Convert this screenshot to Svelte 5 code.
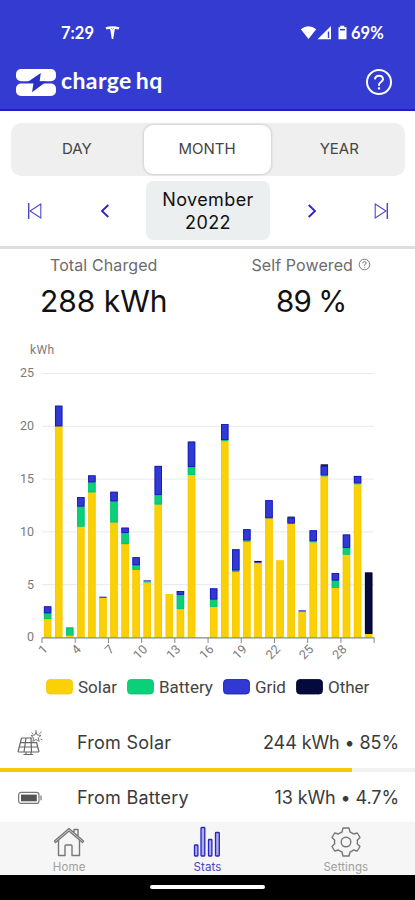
<script lang="ts">
  // running totals in kWh per day: solar, battery, grid, other
  const totals = [
    [1.75, 2.3, 2.95], [20, 20, 21.95], [0.2, 0.9, 0.95], [10.5, 12.4, 13.3], [13.75, 14.7, 15.35],
    [3.75, 3.75, 3.87], [10.9, 12.9, 13.8], [8.85, 9.9, 10.4], [6.4, 6.85, 7.6], [5.2, 5.3, 5.42],
    [12.6, 13.5, 16.25], [4.1, 4.1, 4.1], [2.7, 4.05, 4.4], [15.4, 16.15, 18.55], [0, 0, 0],
    [2.9, 3.6, 4.65], [18.6, 18.7, 20.2], [6.2, 6.35, 8.35], [9.05, 9.2, 10.25], [7.05, 7.05, 7.12, 7.25],
    [11.3, 11.3, 13], [7.3, 7.3, 7.3], [10.75, 10.8, 11.35, 11.45], [2.45, 2.45, 2.58], [9, 9.12, 10.15],
    [15.25, 15.35, 16.25, 16.4], [4.7, 5.4, 6.1], [7.85, 8.5, 9.75], [14.5, 14.6, 15.3], [0.35, 0.35, 0.35, 6.15],
  ];

  const colors = ["#fad106", "#0bcf79", "#3039d2", "#040b3c"];
  const edges = ["#f8ca00", "#08c26d", "#1515b8", "#000522"];
  const series = ["Solar", "Battery", "Grid", "Other"];

  const base = 297.5;
  const unit = 10.56;
  const step = 11.07;

  const bars = totals.flatMap((t, i) =>
    t.map((top, s) => {
      const from = s === 0 ? 0 : t[s - 1];
      return { x: 43.9 + i * step, y: base - top * unit, h: (top - from) * unit, s };
    }).filter((b) => b.h > 0)
  );

  const labels = [1, 4, 7, 10, 13, 16, 19, 22, 25, 28];

  const rows = [
    { icon: "solar", name: "From Solar", value: "244 kWh • 85%", share: 84.7 },
    { icon: "battery", name: "From Battery", value: "13 kWh • 4.7%", share: 4.7 },
  ];

  let range = $state("MONTH");
</script>

<div class="app">
  <header>
    <div class="status">
      <span class="clock">7:29</span>
      <svg class="tesla" width="15" height="14" viewBox="0 0 15 14">
        <path d="M0.5 1.2Q7.5 -0.6 14.5 1.2L13.5 3.6Q11.5 2.8 9.8 3.2L8.2 13H6.8L5.2 3.2Q3.5 2.8 1.5 3.6Z" fill="#fff" />
        <path d="M6 2 7.5 3.4 9 2" fill="none" stroke="#343bd0" stroke-width="0.5" />
      </svg>
      <svg class="signals" width="48" height="16" viewBox="0 0 48 16">
        <path d="M0.8 4.2Q8.5 -1.8 16.2 4.2L8.5 14Z" fill="#fff" />
        <path d="M17.5 14.3 31 1V14.3Z" fill="#fff" />
        <path d="M28.5 6.5V13" stroke="#343bd0" stroke-width="1.4" />
        <path d="M38.5 2.2H40.2V0.8H44.3V2.2H46.5V14.3H38.5Z" fill="#fff" />
        <path d="M40 4.7H45" stroke="#343bd0" stroke-width="1.5" />
      </svg>
      <span class="charge">69%</span>
    </div>
    <div class="brand">
      <svg width="40" height="27" viewBox="0 0 40 27">
        <rect width="40" height="12.2" rx="5" fill="#fff" />
        <rect y="14.6" width="40" height="12.4" rx="5" fill="#fff" />
        <path d="M24.8 4 10.5 13.8H17.6L16 23.3 30.5 12.6H23.6Z" fill="#2a2fc6" />
      </svg>
      <span class="name">charge hq</span>
      <svg class="help" width="28" height="28" viewBox="0 0 28 28" fill="none" stroke="#fff">
        <circle cx="14" cy="14" r="12" stroke-width="2" />
        <path d="M10 11.4Q10.2 7.7 14 7.7T18 11.1Q18 12.8 16 14T14 17V17.8" stroke-width="2" />
        <path d="M14 19.3V21.4" stroke-width="2.2" />
      </svg>
    </div>
  </header>

  <div class="tabs">
    {#each ["DAY", "MONTH", "YEAR"] as tab}
      <button class:active={range === tab} onclick={() => (range = tab)}>{tab}</button>
    {/each}
  </div>

  <nav class="period">
    <svg width="16" height="18" viewBox="0 0 16 18" fill="none" stroke="#4a4ac8">
      <path d="M1.7 1V17" stroke-width="1.4" />
      <path d="M13.8 2V16L3 9Z" stroke-width="1.1" />
    </svg>
    <svg class="prev" width="12" height="16" viewBox="0 0 12 16" fill="none" stroke="#2922c8" stroke-width="1.8">
      <path d="M9.3 2 3 8 9.3 14" />
    </svg>
    <div class="month">November<br />2022</div>
    <svg class="next" width="12" height="16" viewBox="0 0 12 16" fill="none" stroke="#2922c8" stroke-width="1.8">
      <path d="M2.7 2 9 8 2.7 14" />
    </svg>
    <svg width="16" height="18" viewBox="0 0 16 18" fill="none" stroke="#4a4ac8">
      <path d="M14.3 1V17" stroke-width="1.4" />
      <path d="M2.2 2V16L13 9Z" stroke-width="1.1" />
    </svg>
  </nav>

  <section class="summary">
    <div class="stat">
      <div class="label">Total Charged</div>
      <div class="value">288 kWh</div>
    </div>
    <div class="stat">
      <div class="label">
        Self Powered
        <svg width="13" height="13" viewBox="0 0 13 13" fill="none" stroke="#777">
          <circle cx="6.5" cy="6.5" r="5.3" stroke-width="1" />
          <path d="M4.7 5.2Q4.8 3.6 6.5 3.6T8.2 5.1Q8.2 6 6.6 6.8V7.8M6.6 8.8V9.8" stroke-width="1" />
        </svg>
      </div>
      <div class="value pct">89 %</div>
    </div>
  </section>

  <svg class="chart" width="415" height="330" viewBox="0 0 415 330">
    <text x="30" y="14" class="unit" textLength="24">kWh</text>
    {#each [25, 20, 15, 10, 5, 0] as tick}
      {#if tick > 0}
        <line x1="42" x2="374" y1={base - tick * unit} y2={base - tick * unit} stroke="#e6e9ed" stroke-width="1" />
      {/if}
      <text x="34" y={base - tick * unit + 3.9} class="tick">{tick}</text>
    {/each}
    {#each bars as b}
      <rect x={b.x} y={b.y} width="7.4" height={b.h} fill={colors[b.s]} />
      {#if b.h > 2}
        <rect x={b.x + 0.4} y={b.y + 0.4} width="6.6" height={b.h - 0.8} fill="none" stroke={edges[b.s]} stroke-width="0.8" />
      {/if}
    {/each}
    <path d="M42 297.9H374.5" stroke="#85878b" stroke-width="1.2" />
    {#each [...labels, 31] as d}
      <path d={`M${42 + (d - 1) * step} 298v5`} stroke="#85878b" stroke-width="1" />
    {/each}
    {#each labels as d}
      <text class="day" transform={`translate(${48.5 + (d - 1) * step} 310) rotate(-45)`}>{d}</text>
    {/each}
  </svg>

  <div class="legend">
    {#each series as name, i}
      <div class="key">
        <svg width="27" height="16"><rect x="0.5" y="0.5" width="26" height="14.5" rx="3.5" fill={colors[i]} stroke={edges[i]} stroke-width="0.8" /></svg>
        <span>{name}</span>
      </div>
    {/each}
  </div>

  <main>
    {#each rows as row}
      <div class="row">
        {#if row.icon === "solar"}
          <svg width="26" height="26" viewBox="0 0 26 26" fill="none" stroke="#666" stroke-width="1.2">
            <path d="M4.5 8H15.5M3.2 12.7H20M1.7 17H21.3M1 22H22M4.5 8 1 22M9 8 7 22M14 8 14.5 22M19.5 12 22 22M6.5 24.5H16M9 22V25M14 22V25" />
            <path d="M19 2 20.2 5 24 5.4 21.2 8 22.2 11.3 19 9.6 15.8 11.3 16.8 8 14 5.4 17.8 5ZM14.5 2.5 16 4M19 0V2M24.5 2 22.5 3.5M23.5 9 25.5 10" stroke-width="0.9" />
          </svg>
        {:else}
          <svg width="26" height="14" viewBox="0 0 26 14">
            <rect x="1.6" y="1.4" width="20.4" height="11" rx="2.5" fill="none" stroke="#777" stroke-width="1.2" />
            <rect x="4" y="3.6" width="15.8" height="6.7" fill="#555" />
            <path d="M24 4.5V9.3" stroke="#999" stroke-width="1.6" />
          </svg>
        {/if}
        <span class="source">{row.name}</span>
        <span class="amount">{row.value}</span>
      </div>
      <div class="bar"><div class="fill" style="width: {row.share}%"></div></div>
    {/each}
  </main>

  <footer>
    <div class="item">
      <svg width="32" height="32" viewBox="0 0 32 32" fill="none" stroke="#777" stroke-width="1.4" stroke-linejoin="round">
        <path d="M5.5 14V29.5H12V20Q12 19 13 19H18Q19 19 19 20V29.5H26.5V14" />
        <path d="M2.5 16.5 1.5 15 16 2.5 30.5 15 29.5 16.5 16 5ZM21 6V3.5H25V10" />
      </svg>
      <span>Home</span>
    </div>
    <div class="item current">
      <svg width="32" height="32" viewBox="0 0 32 32" fill="#aaaceb" stroke="#2824be" stroke-width="1.3">
        <rect x="3.5" y="19" width="3.4" height="11" rx="0.7" />
        <rect x="10" y="1.5" width="3.8" height="28.5" rx="0.7" />
        <rect x="17.5" y="13.5" width="3.4" height="16.5" rx="0.7" />
        <rect x="24.5" y="6.5" width="3.8" height="23.5" rx="0.7" />
      </svg>
      <span>Stats</span>
    </div>
    <div class="item">
      <svg width="32" height="32" viewBox="0 0 32 32" fill="none" stroke="#777" stroke-width="1.4" stroke-linejoin="round">
        <path d="M13 2H19L20 6Q22 6.8 23.5 8L27.3 7 30 11.5 27.3 14.2Q27.6 16 27.3 17.8L30 20.5 27.3 25 23.5 24Q22 25.3 20 26L19 30H13L12 26Q10 25.3 8.5 24L4.7 25 2 20.5 4.7 17.8Q4.4 16 4.7 14.2L2 11.5 4.7 7 8.5 8Q10 6.8 12 6Z" />
        <circle cx="16" cy="16" r="4.8" />
      </svg>
      <span>Settings</span>
    </div>
  </footer>
  <div class="gesture"><div class="pill"></div></div>
</div>

<style>
  :global(body) {
    margin: 0;
    background: #fff;
  }

  .app {
    display: flex;
    flex-direction: column;
    width: 415px;
    height: 900px;
    overflow: hidden;
    background: #fff;
    color: #111;
    font-family: Inter, "Noto Sans", sans-serif;
  }

  .app > * { flex-shrink: 0; }
  svg { display: block; }

  header {
    box-sizing: border-box;
    height: 111px;
    padding-top: 23px;
    background: #343bd0;
    border-bottom: 2px solid #2020ba;
    color: #fff;
  }

  .status {
    display: flex;
    align-items: center;
    height: 19px;
    padding: 0 29px 0 61px;
    font-family: Lato, sans-serif;
    font-size: 16.5px;
    font-weight: 700;
  }

  .clock { width: 33px; }
  .tesla { margin-left: 11px; }
  .signals { margin-left: auto; }
  .charge { width: 35px; margin-left: 3px; }

  .brand {
    display: flex;
    align-items: center;
    height: 28px;
    margin-top: 26px;
    padding: 0 22px 0 16px;
  }

  .name {
    margin: -4px 0 0 5px;
    font-family: Lato, sans-serif;
    font-size: 23px;
    font-weight: 700;
    word-spacing: -2px;
    letter-spacing: 0.4px;
  }

  .help { margin-left: auto; }

  .tabs {
    display: flex;
    box-sizing: border-box;
    height: 53px;
    margin: 12px 10px 0 11px;
    padding: 2px;
    border-radius: 10px;
    background: #efefef;
  }

  .tabs button {
    flex: 1;
    padding: 0 0 2px;
    border: none;
    border-radius: 9px;
    background: none;
    color: #444;
    font-family: inherit;
    font-size: 15px;
  }

  .tabs button:first-child { padding-right: 3px; }
  .tabs button:last-child { padding-left: 5px; }

  .tabs .active {
    flex: 0 0 127px;
    background: #fff;
    box-shadow: 0 0 3px rgba(0, 0, 0, 0.25);
  }

  .period {
    display: flex;
    align-items: center;
    justify-content: space-between;
    box-sizing: border-box;
    height: 73px;
    padding: 2px 26px 3px 27px;
    border-bottom: 3px solid #dedede;
  }

  .prev { margin-left: 20px; }
  .next { margin-right: 20px; }

  .month {
    width: 124px;
    padding: 7px 0 6px;
    border-radius: 7px;
    background: #eceff0;
    font-size: 18px;
    line-height: 23px;
    letter-spacing: 0.4px;
    text-align: center;
  }

  .summary {
    display: flex;
    height: 91px;
  }

  .stat {
    flex: 1;
    padding-top: 5px;
    text-align: center;
  }

  .label {
    display: flex;
    justify-content: center;
    gap: 5px;
    color: #6b6b6b;
    font-size: 16px;
    letter-spacing: 0.1px;
    line-height: 22px;
  }

  .label svg { margin-top: 4px; }

  .value {
    margin-top: 7px;
    font-size: 30px;
    line-height: 36px;
  }

  .pct {
    font-size: 29.5px;
    letter-spacing: -0.7px;
    word-spacing: -0.5px;
  }

  .chart text {
    font-family: Roboto, sans-serif;
    fill: #7b7b7b;
  }
  .chart .unit { font-size: 12px; }
  .chart .tick { font-size: 12.5px; text-anchor: end; }
  .chart .day { font-size: 12.5px; text-anchor: end; }

  .legend {
    display: flex;
    align-items: center;
    gap: 10px;
    box-sizing: border-box;
    height: 34px;
    padding-left: 46px;
    font-family: Roboto, sans-serif;
    font-size: 17px;
    color: #444;
  }

  .key {
    display: flex;
    align-items: center;
    gap: 5px;
  }

  main {
    height: 118px;
    padding-top: 13px;
    box-sizing: border-box;
    overflow: hidden;
  }

  .row {
    display: flex;
    align-items: center;
    height: 51px;
    padding: 0 16px 0 17px;
    color: #3a3a3a;
    font-size: 18px;
  }

  .source {
    margin-left: 34px;
    letter-spacing: 0.25px;
  }

  .amount {
    margin-left: auto;
    letter-spacing: -0.1px;
  }

  .bar {
    height: 4px;
    background: #f1f1f1;
  }

  .fill {
    height: 100%;
    background: #f6ca07;
  }

  footer {
    display: flex;
    height: 53px;
    background: #f6f6f6;
  }

  .item {
    display: flex;
    flex: 1;
    flex-direction: column;
    align-items: center;
    padding-top: 4px;
    color: #a0a0a0;
    font-size: 11.5px;
    line-height: 14px;
    letter-spacing: 0.1px;
  }

  .item span { margin-top: 2px; }
  .current { color: #4340c8; }

  .gesture {
    display: flex;
    justify-content: center;
    flex: 1;
    padding-top: 10px;
    background: #000;
  }

  .pill {
    width: 115px;
    height: 4px;
    border-radius: 2px;
    background: #fff;
  }
</style>
